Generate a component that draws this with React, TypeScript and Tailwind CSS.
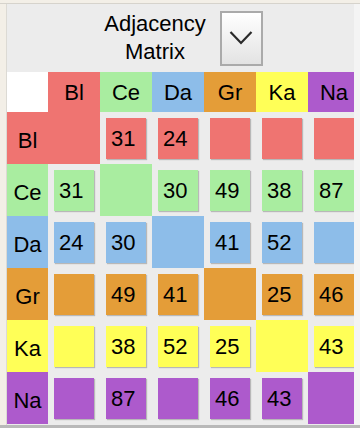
import React from 'react';

const names = ['Bl', 'Ce', 'Da', 'Gr', 'Ka', 'Na'];

const colors: Record<string, string> = {
  Bl: 'bg-[#ef7471]',
  Ce: 'bg-[#a9eda0]',
  Da: 'bg-[#8dbde9]',
  Gr: 'bg-[#e49d38]',
  Ka: 'bg-[#ffff57]',
  Na: 'bg-[#ad5acc]',
};

// weights between groups, symmetric; null means no edge
const weights: (number | null)[][] = [
  [null, 31, 24, null, null, null],
  [31, null, 30, 49, 38, 87],
  [24, 30, null, 41, 52, null],
  [null, 49, 41, null, 25, 46],
  [null, 38, 52, 25, null, 43],
  [null, 87, null, 46, 43, null],
];

const font = { fontFamily: '"Liberation Sans", Arial, sans-serif' };

const App: React.FC = () => {
  return (
    <div className="w-[360px] h-[428px] bg-[#f3efe7] overflow-hidden pt-[3px]" style={font}>
      <div className="flex h-[422px] border-t border-[#d6d3cc]">
        <div className="w-[6px] shrink-0 bg-[#f3efe7]" />
        <div className="w-[348px] shrink-0 bg-[#ececec] overflow-hidden border-l border-[#dcdad4]">
          {/* title + dropdown */}
          <div className="h-[68px] flex items-center justify-center gap-[14px] pl-[6px]">
            <div className="text-center text-[22px] leading-[28px] text-black">
              <div>Adjacency</div>
              <div>Matrix</div>
            </div>
            <button className="w-[43px] h-[55px] border-2 border-[#aaaaaa] bg-gradient-to-b from-white to-[#e3e3e3] flex items-center justify-center">
              <svg width="24" height="16" viewBox="0 0 24 16">
                <polyline points="1.5,2 12,13 22.5,2" fill="none" stroke="#2a2a2a" strokeWidth="2.2" />
              </svg>
            </button>
          </div>

          {/* matrix */}
          <div className="grid grid-cols-[41px_repeat(6,52px)] grid-rows-[40px_repeat(6,52px)] text-[22px] text-black">
            <div className="bg-white" />
            {names.map((n) => (
              <div key={n} className={`${colors[n]} flex items-center justify-center`}>
                {n}
              </div>
            ))}
            {names.map((row, i) => (
              <React.Fragment key={row}>
                <div className={`${colors[row]} flex items-center justify-center pt-[4px]`}>{row}</div>
                {names.map((col, j) =>
                  i === j ? (
                    <div key={col} className={colors[row]} />
                  ) : (
                    <div key={col} className="flex items-center justify-center">
                      <div
                        className={`${colors[row]} w-[40px] h-[41px] flex items-center pl-[5px] shadow-[1px_1px_1px_rgba(0,0,0,0.22)]`}
                      >
                        {weights[i][j] ?? ''}
                      </div>
                    </div>
                  )
                )}
              </React.Fragment>
            ))}
          </div>
        </div>
        <div className="flex-1 bg-[#f4f4f4]" />
      </div>
      <div className="h-[3px] bg-[#b9b9b9]" />
    </div>
  );
};

export default App;
